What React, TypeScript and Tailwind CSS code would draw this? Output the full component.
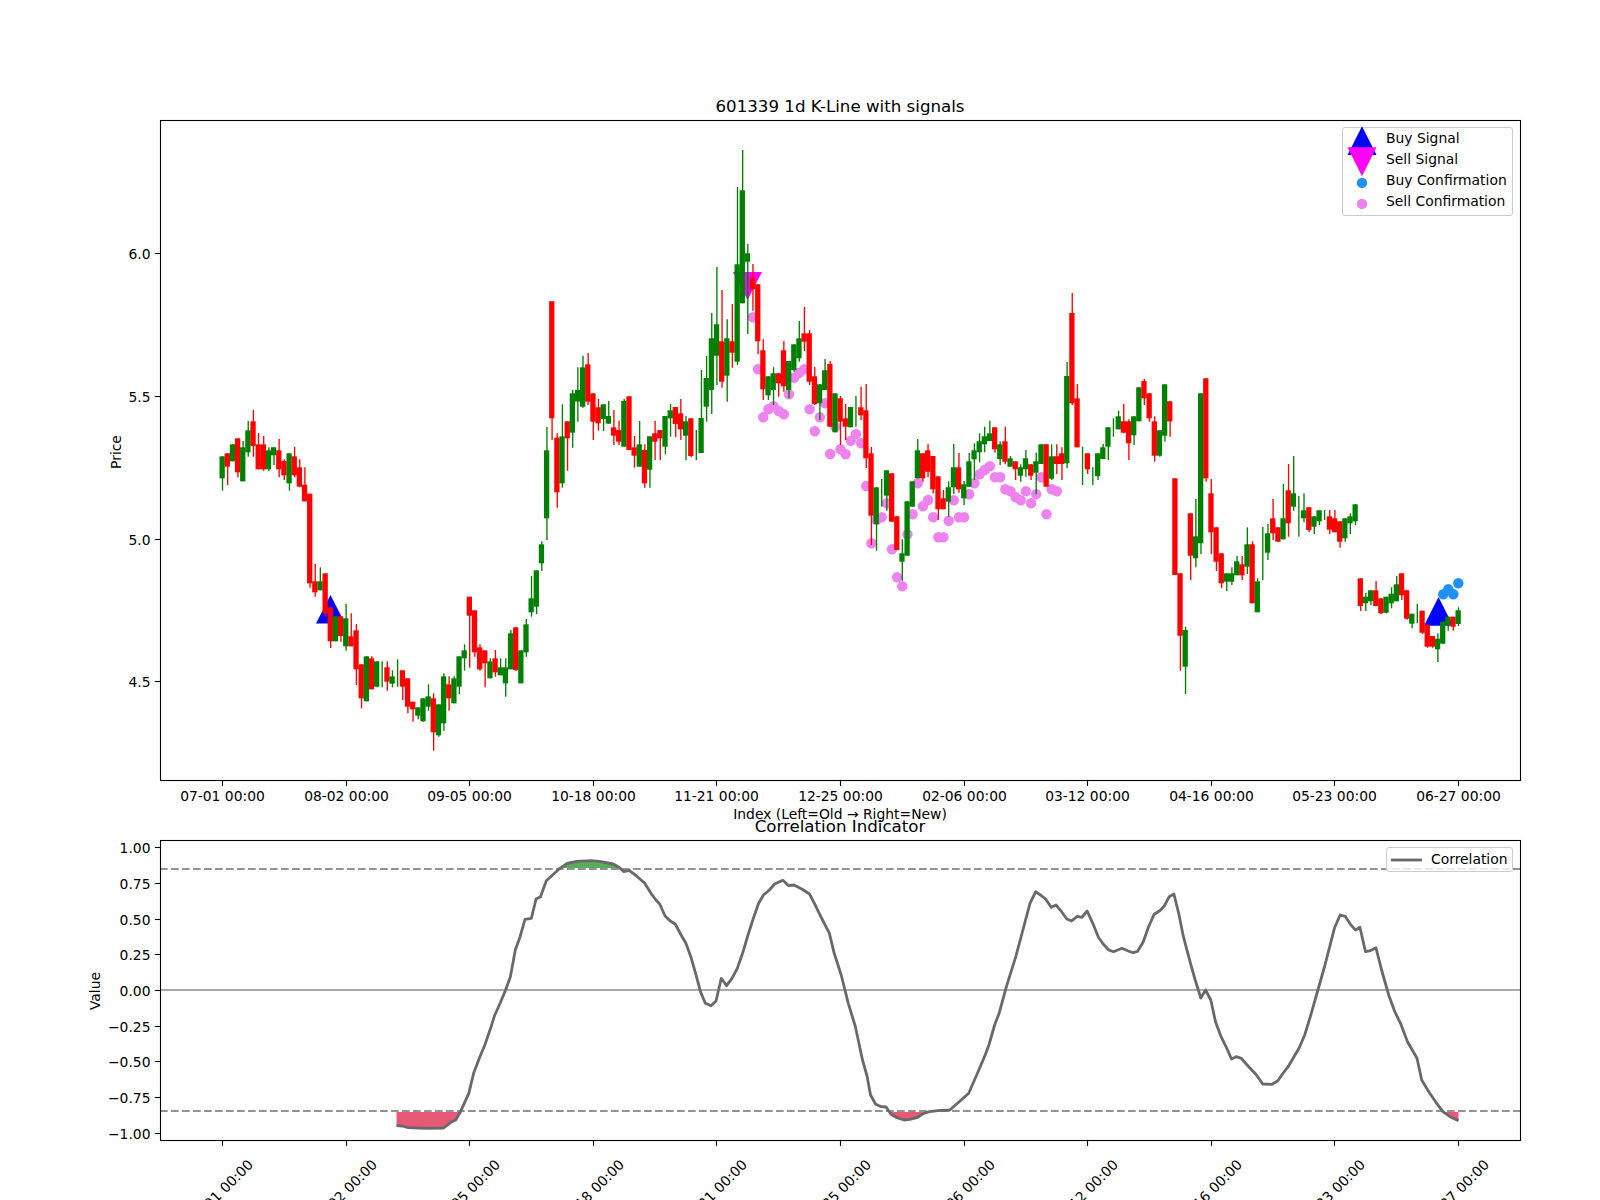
type Row = ['G' | 'R', number, number, number, number]

const G = 'G' as const
const R = 'R' as const

// candles 0-73, y offsets measured from 400 in thirds of a pixel
const early: Row[] = [
  [G,169,235,169,272],[R,160,200,160,255],[G,133,184,133,184],[R,115,217,115,232],[G,142,244,123,244],
  [G,91,157,63,170],[R,64,138,30,170],[R,133,208,99,208],[R,133,208,108,212],[G,151,208,142,212],
  [G,142,166,142,195],[R,151,208,117,232],[R,183,226,178,240],[G,160,250,160,272],[R,169,226,141,232],
  [R,202,260,178,262],[R,254,304,202,304],[R,281,550,281,563],[R,544,577,492,590],[G,544,571,502,571],
  [R,520,640,520,650],[R,622,724,622,744],[G,649,724,649,724],[R,649,708,649,725],[G,655,739,612,752],
  [R,709,739,640,739],[R,691,808,672,855],[R,793,895,793,925],[G,769,904,769,904],[R,775,868,769,868],
  [G,784,860,784,862],[G,784,784,784,862],[R,802,845,784,872],[G,829,851,811,862],[G,778,778,778,860],
  [R,811,860,811,900],[R,835,920,835,940],[R,905,928,905,965],[G,922,947,922,958],[G,895,964,895,965],
  [G,889,920,853,932],[R,895,997,880,1052],[G,913,1006,913,1010],[G,829,970,820,992],[R,853,895,829,932],
  [G,835,910,829,910],[G,769,860,769,882],[G,751,775,733,812],[R,590,647,590,803],[R,631,757,631,770],
  [R,742,808,733,812],[R,751,790,751,862],[G,784,835,775,835],[R,775,817,750,830],[G,802,826,775,826],
  [G,802,850,775,890],[G,700,808,690,808],[R,682,810,682,813],[G,751,850,751,850],[G,673,757,657,770],
  [G,595,637,528,650],[G,511,620,511,642],[G,433,490,424,513],[G,151,355,81,420],[R,-296,55,-296,120],
  [R,113,277,100,323],[G,109,250,13,263],[R,64,115,64,212],[G,-20,98,-30,143],[G,-30,5,-98,65],
  [G,-98,20,-133,23],[R,-107,5,-141,15],[R,-20,65,-20,120],[R,22,70,-3,92],
]

// candles 74-92, offsets from 350
const middle: Row[] = [
  [G,163,207,163,243],[G,198,221,153,221],[R,232,257,180,285],[R,240,275,212,285],[G,153,290,147,290],
  [R,139,300,139,300],[R,292,317,258,353],[G,283,350,213,350],[R,300,400,283,413],[G,259,359,259,413],
  [R,250,275,213,330],[R,240,265,240,330],[G,198,290,198,312],[G,181,205,162,260],[R,171,222,171,262],
  [R,190,238,147,270],[G,214,257,198,330],[R,205,318,205,322],[G,240,240,240,330],
]

// candles 93-240, page pixels
const late: Row[] = [
  [G,418,453,370,453],[G,378,406.7,356,421.7],[G,338.3,390,313,414],[G,324.3,355.7,267,385],[R,341.3,381.7,290,387.7],
  [G,338.3,375.7,319.3,401.7],[R,341.3,352.7,304,367.7],[G,264.3,361.7,187,365],[G,190.3,303.3,150,303.3],[G,253.3,261.7,244,334],
  [R,278,289.3,264,310.7],[R,284.3,341.3,284.3,354],[R,350.3,389.3,339.3,400],[G,376.3,395.3,376.3,400],[G,373.3,390,367.3,405],
  [R,373.3,383.3,373.3,396.7],[R,350.3,386.3,341,391.7],[G,361,390,361,398.3],[G,344.3,370,344.3,371.7],[G,338.3,358.3,321,361.7],
  [R,333.3,341.7,307,351],[R,333.3,381.7,330,385],[R,376.3,404,367,405],[G,384.3,403.3,384.3,420],[G,370.3,390,359,390],
  [R,364,426.7,361,426.7],[G,393.3,432.3,393.3,432.3],[R,398.3,421.7,396,445],[R,418.3,426.7,404,440],[G,407,427.3,407,427.3],
  [G,396,396,396,426.7],[R,407.3,415.3,386.7,420],[R,410.3,458.3,384,468],[R,453.3,515.7,447,545],[G,487.3,524,487.3,550.7],
  [G,479,479,479,506.7],[G,470.3,495.7,470.3,510.7],[R,473.3,521.7,473.3,521.7],[R,516.3,550,516.3,550],[G,553.3,561.7,539.3,580.7],
  [G,501.3,555.7,501.3,555.7],[G,481.3,506.7,481.3,506.7],[G,450.3,478.3,439,478.3],[R,453.3,478.3,453.3,481.7],[R,450.3,471.7,444,477.3],
  [R,456,489.3,456,493.3],[R,476.3,509.3,476.3,520],[R,498.3,509.3,490,509.3],[G,487.3,501.7,481.3,516.7],[G,467.3,487.3,444,494],
  [R,467.3,489.3,453,492.7],[G,484.3,498.3,481,505],[G,461.3,486.7,453,486.7],[G,450.3,459.3,443.3,480],[G,441.3,452.3,433.3,462.3],
  [G,436.3,444.3,426.7,452.3],[G,433.3,441,420.7,441],[R,427.3,449.3,427.3,452.7],[G,444.3,459,441.3,465],[R,441.3,461.7,426.7,464.3],
  [G,458.3,466.7,456,466.7],[R,461.3,469.3,461.3,480],[G,467.3,475.7,464.3,481.7],[G,458.3,469.3,450,476.7],[R,464.3,475.7,464.3,480],
  [G,461.3,472.7,452.7,494.3],[G,444.3,464,444.3,464],[R,444.3,486.7,444.3,486.7],[G,456.3,478.7,444.3,480],[R,456.3,464,444.3,474],
  [R,453.3,464,447.3,480],[G,376,463.3,362,468.3],[R,313,403.3,293,405],[R,398.3,447.3,384,447.3],[G,446.7,446.7,446.7,485],
  [R,453.3,469.3,453.3,474],[G,467.3,467.3,467.3,485],[G,453.3,476,453.3,480],[G,447.3,459,444,459],[G,427.3,446.7,427.3,460],
  [G,418.3,418.3,418.3,436.7],[G,416.3,429.3,410.7,429.3],[R,421.3,432.7,404,433.3],[R,421.3,443.3,419.3,460],[G,416.3,435.3,416.3,445],
  [G,387.3,421.3,387.3,421.3],[R,381,398.3,379,405],[R,393.3,418.3,393.3,421.7],[R,421.3,455.7,416.3,461.7],[G,430.3,455.7,430.3,456.7],
  [G,384.3,435.7,384.3,441.7],[R,401.3,421.3,401.3,436.7],[R,478.3,575,478.3,575],[R,573.3,635.7,573.3,670.7],[G,630,666.7,626.7,694],
  [R,513.3,555.7,513.3,580],[G,536.3,558.3,499,567.3],[G,393.3,543.3,393.3,554],[R,378.3,478.3,378.3,481.7],[R,493.3,532.3,479,554],
  [R,527.3,561.7,527.3,571],[R,553.3,583.3,553.3,588.3],[G,573.3,581.7,573.3,591],[G,573.3,581.7,567.3,585],[G,561.3,575.3,556,575.3],
  [R,564.3,575.3,556,580],[G,544.3,566.7,527.3,574],[R,544.3,603.3,541.3,603.3],[G,581.3,612.3,578.3,612.3],[G,527,527,527,580],
  [G,533.3,552.7,524,560],[R,518.3,533.3,499,540],[R,527.3,541.7,527.3,541.7],[G,518.3,539.3,484,539.3],[R,490.3,523.3,464,536.7],
  [G,493.3,506.7,456,510.7],[G,496,496,496,536.7],[G,510.3,518.3,493.3,522.3],[R,507.3,530,507.3,532],[G,516.3,526.7,516.3,534],
  [G,510.3,521.3,510.3,525],[G,510,510,510,520],[R,516.3,529.7,510,534],[R,518.3,532.3,510,532.3],[R,521.3,541.7,521.3,547.7],
  [G,518.3,538.3,518.3,541.7],[G,516.3,523.3,513.3,534],[G,504.3,521.3,504,525],[R,578.3,606,578.3,611],[G,596.7,603.3,592.7,611],
  [G,590.3,601.3,590.3,605],[R,590.3,606,581,606],[R,598.3,613.3,598.3,614],[G,596.7,612.7,596.7,613.3],[G,593.7,603.3,587.3,608.3],
  [G,584.3,601.3,576,601.3],[R,573.3,595.3,573.3,600],[R,590.3,618.7,590.3,619.7],[G,613.7,623.7,613.7,628.3],[G,604,604,604,623.3],
  [R,610.7,632.7,610.7,634],[R,624.7,646.7,624.7,647.7],[R,636,646.7,636,647.7],[G,638.7,649.3,633.3,662],[G,621.7,643.7,621.7,643.7],
  [G,616.7,625,616.7,630.7],[R,616.7,626.7,616.7,630.7],[G,610.3,624,607.3,626],
]

const fromThirds = (rows: Row[], base: number): Row[] =>
  rows.map(([c, t, b, h, l]) => [c, base + t / 3, base + b / 3, base + h / 3, base + l / 3])

const candles = [...fromThirds(early, 400), ...fromThirds(middle, 350), ...late]
const candleX = (i: number) => 222.5 + 5.15 * i

const sellDots = [
  317.3,369.3,417.3,409.3,406.3,411,414.3,394.3,377.7,372.7,369.3,409.3,431.3,417.3,403.3,454,426.7,449.3,454.3,440.7,
  434.3,443.3,486,543.3,520,517.3,503.3,549.3,577.3,586.3,534.3,514.3,483.3,506.3,500,517.3,537.3,537.3,520.7,500.3,
  517.3,517.3,494.3,483.3,474.3,470,466.3,477.3,477.3,489.3,491.3,497.3,500.3,491.3,503.3,494.3,477.3,514.3,489.3,491.3,
]
const buyDots = [[1443.3, 594.3], [1448.3, 589.3], [1453.3, 594.3], [1458.3, 583.3]]

const leftCurve = [
  [653,977],[665,978],[677,983],[700,984],[720,985],[750,984],[765,967],[775,960],[785,935],[802,880],[812,820],[825,770],
  [835,735],[848,680],[855,648],[867,608],[878,570],[888,530],[898,450],[908,410],[918,358],[931,355],[941,297],[950,290],
  [962,242],[975,225],[990,205],[1005,190],[1025,184],[1055,182],[1075,185],[1100,192],[1112,202],[1122,215],[1133,211],
  [1150,230],[1165,250],[1178,280],[1188,300],[1196,312],[1207,348],[1217,362],[1228,372],[1240,405],[1250,430],[1260,470],
  [1270,520],[1280,575],[1290,610],[1302,617],[1312,603],[1323,535],[1334,557],[1345,535],[1356,505],[1367,460],[1378,405],
  [1388,360],[1400,310],[1410,285],[1422,270],[1433,252],[1450,241],[1462,257],[1473,255],[1490,268],[1505,282],[1515,310],
].map(([x, y]) => [80 + x / 2.063, 800 + y / 3])

const rightCurve = [
  [0,345],[20,400],[30,460],[45,525],[60,610],[75,680],[90,780],[100,830],[107,885],[118,913],[130,920],[140,921],[150,942],
  [163,953],[178,960],[190,958],[205,953],[220,940],[232,935],[250,932],[275,930],[295,905],[315,880],[335,815],[350,765],
  [358,735],[370,675],[380,638],[395,560],[415,470],[430,390],[445,310],[457,275],[470,288],[478,297],[490,322],[500,315],
  [512,335],[523,357],[533,363],[545,349],[555,352],[566,333],[578,370],[590,412],[600,432],[612,450],[622,455],[640,445],
  [652,452],[663,458],[673,454],[685,425],[695,385],[708,343],[720,332],[730,317],[740,290],[750,282],[760,340],[770,410],
  [785,490],[795,540],[807,594],[817,570],[828,600],[838,665],[850,710],[862,745],[872,777],[882,770],[893,775],[905,795],
  [925,825],[938,852],[958,853],[970,842],[980,822],[992,800],[1015,745],[1027,705],[1040,645],[1055,570],[1070,495],
  [1090,385],[1102,345],[1113,349],[1125,375],[1135,390],[1144,382],[1156,455],[1166,452],[1178,443],[1190,510],[1205,585],
  [1218,635],[1230,670],[1245,725],[1265,775],[1275,840],[1290,875],[1305,907],[1320,935],[1335,950],[1353,962],
].map(([x, y]) => [820 + x / 2.119, 800 + y / 3])

const curve = [...leftCurve, ...rightCurve]
const curvePoints = curve.map(([x, y]) => `${x.toFixed(1)},${y.toFixed(1)}`).join(' ')
const first = curve[0][0].toFixed(1)
const last = curve[curve.length - 1][0].toFixed(1)

const UPPER_Y = 869
const LOWER_Y = 1111

const dates = ['07-01','08-02','09-05','10-18','11-21','12-25','02-06','03-12','04-16','05-23','06-27']
const tickX = dates.map((_, i) => Math.floor(222.5 + 123.6 * i) + 0.5)
const priceTicks: [string, number][] = [['6.0', 253.5], ['5.5', 396.5], ['5.0', 539.5], ['4.5', 681.5]]
const valueTicks = ['1.00','0.75','0.50','0.25','0.00','−0.25','−0.50','−0.75','−1.00']

function Triangle({ x, tip, base, color }: { x: number; tip: number; base: number; color: string }) {
  return <polygon points={`${x},${tip} ${x - 14.5},${base} ${x + 14.5},${base}`} fill={color} />
}

function PriceChart() {
  return (
    <svg viewBox="160 120 1360 660" className="block h-[660px] w-[1360px] overflow-visible">
      <Triangle x={330.5} tip={595} base={623.5} color="#0000ff" />
      <Triangle x={1438.5} tip={597} base={625.7} color="#0000ff" />
      <Triangle x={747.5} tip={300} base={272} color="#ff00ff" />
      {sellDots.map((y, i) => (
        <circle key={i} cx={candleX(103 + i)} cy={y} r={5.2} fill="#ee82ee" />
      ))}
      {buyDots.map(([x, y]) => (
        <circle key={x} cx={x} cy={y} r={5.2} fill="#1e90ff" />
      ))}
      {candles.map(([c, top, bottom, high, low], i) => {
        const color = c === 'G' ? '#008000' : '#ff0000'
        const x = candleX(i)
        return (
          <g key={i}>
            <line x1={x} x2={x} y1={high} y2={low} stroke={color} strokeWidth={1.35} />
            {bottom > top && <rect x={x - 3} y={top} width={5.3} height={bottom - top} fill={color} />}
          </g>
        )
      })}
      <rect x={160.5} y={120.5} width={1360} height={660} fill="none" stroke="#000" strokeWidth={1.1} />
      {tickX.map((x, i) => (
        <g key={x}>
          <line x1={x} x2={x} y1={781} y2={786} stroke="#000" strokeWidth={1.1} />
          <text x={x} y={801} textAnchor="middle" fontSize={13.89}>{dates[i]} 00:00</text>
        </g>
      ))}
      {priceTicks.map(([label, y]) => (
        <g key={label}>
          <line x1={155} x2={160} y1={y} y2={y} stroke="#000" strokeWidth={1.1} />
          <text x={150.5} y={y + 5} textAnchor="end" fontSize={13.89}>{label}</text>
        </g>
      ))}
      <text x={115.5} y={452} textAnchor="middle" dominantBaseline="central" fontSize={13.89} transform="rotate(-90 115.5 452)">Price</text>
    </svg>
  )
}

function CorrelationChart() {
  return (
    <svg viewBox="160 840 1360 300" className="block h-[300px] w-[1360px] overflow-visible">
      <defs>
        <clipPath id="aboveUpper"><rect x={160} y={840} width={1360} height={UPPER_Y - 841} /></clipPath>
        <clipPath id="belowLower"><rect x={160} y={LOWER_Y + 1} width={1360} height={1140 - LOWER_Y} /></clipPath>
      </defs>
      <polygon points={`${first},${UPPER_Y} ${curvePoints} ${last},${UPPER_Y}`} fill="#008000" fillOpacity={0.65} clipPath="url(#aboveUpper)" />
      <polygon points={`${first},${LOWER_Y} ${curvePoints} ${last},${LOWER_Y}`} fill="#dc143c" fillOpacity={0.7} clipPath="url(#belowLower)" />
      <line x1={160} x2={1520} y1={990} y2={990} stroke="#aaaaaa" strokeWidth={2} />
      <line x1={160} x2={1520} y1={UPPER_Y} y2={UPPER_Y} stroke="#939393" strokeWidth={2} strokeDasharray="7.7 3.3" />
      <line x1={160} x2={1520} y1={LOWER_Y} y2={LOWER_Y} stroke="#939393" strokeWidth={2} strokeDasharray="7.7 3.3" />
      <polyline points={curvePoints} fill="none" stroke="#696969" strokeWidth={2.8} strokeLinejoin="round" />
      <rect x={160.5} y={840.5} width={1360} height={300} fill="none" stroke="#000" strokeWidth={1.1} />
      {tickX.map((x, i) => (
        <g key={x}>
          <line x1={x} x2={x} y1={1141} y2={1146} stroke="#000" strokeWidth={1.1} />
          <text x={x - 2} y={1192} textAnchor="middle" dominantBaseline="central" fontSize={13.89} transform={`rotate(-45 ${x - 2} 1192)`}>
            {dates[i]} 00:00
          </text>
        </g>
      ))}
      {valueTicks.map((label, i) => {
        const y = Math.floor(847.7 + i * 35.7) + 0.5
        return (
          <g key={label}>
            <line x1={155} x2={160} y1={y} y2={y} stroke="#000" strokeWidth={1.1} />
            <text x={150.5} y={y + 5} textAnchor="end" fontSize={13.89}>{label}</text>
          </g>
        )
      })}
      <text x={94.5} y={991} textAnchor="middle" dominantBaseline="central" fontSize={13.89} transform="rotate(-90 94.5 991)">Value</text>
    </svg>
  )
}

function SignalLegend() {
  const rows = [
    { label: 'Buy Signal', mark: <polygon points="19,-1.8 4.5,26.9 33.5,26.9" fill="#0000ff" /> },
    { label: 'Sell Signal', mark: <polygon points="19,27.2 4.5,-1.8 33.5,-1.8" fill="#ff00ff" /> },
    { label: 'Buy Confirmation', mark: <circle cx={19} cy={12.9} r={5.2} fill="#1e90ff" /> },
    { label: 'Sell Confirmation', mark: <circle cx={19} cy={12.9} r={5.2} fill="#ee82ee" /> },
  ]
  return (
    <div className="absolute right-[7px] top-[7px] flex h-[89px] w-[171px] flex-col rounded-[3px] border border-[#cccccc] bg-white/80 text-[13.89px] leading-none">
      {rows.map((row) => (
        <div key={row.label} className="flex h-[21px] items-center gap-[5px]">
          <svg viewBox="0 0 38 21" className="h-[21px] w-[38px] shrink-0 overflow-visible">{row.mark}</svg>
          <span className="whitespace-nowrap">{row.label}</span>
        </div>
      ))}
    </div>
  )
}

export default function App() {
  return (
    <div className="flex h-[1200px] w-[1600px] flex-col overflow-hidden bg-white pl-[160px] text-black [font-family:'DejaVu_Sans',sans-serif]">
      <div className="flex h-[120px] w-[1360px] shrink-0 items-end justify-center pb-[4px] text-[16.67px] leading-none">
        601339 1d K-Line with signals
      </div>
      <div className="relative h-[660px] w-[1360px] shrink-0">
        <PriceChart />
        <SignalLegend />
      </div>
      <div className="relative flex h-[60px] w-[1360px] shrink-0 items-end justify-center pb-[4px] text-[16.67px] leading-none">
        <span className="absolute inset-x-0 top-[28px] text-center text-[13.89px] leading-none">Index (Left=Old → Right=New)</span>
        <span className="relative">Correlation Indicator</span>
      </div>
      <div className="relative h-[300px] w-[1360px] shrink-0">
        <CorrelationChart />
        <div className="absolute right-[7px] top-[7px] flex h-[25px] w-[127px] items-center gap-[9px] rounded-[3px] border border-[#cccccc] bg-white/80 pl-[4px] text-[13.89px] leading-none">
          <svg viewBox="0 0 31 4" className="h-[4px] w-[31px] shrink-0">
            <line x1={0} x2={31} y1={2} y2={2} stroke="#696969" strokeWidth={2.8} />
          </svg>
          <span>Correlation</span>
        </div>
      </div>
    </div>
  )
}
